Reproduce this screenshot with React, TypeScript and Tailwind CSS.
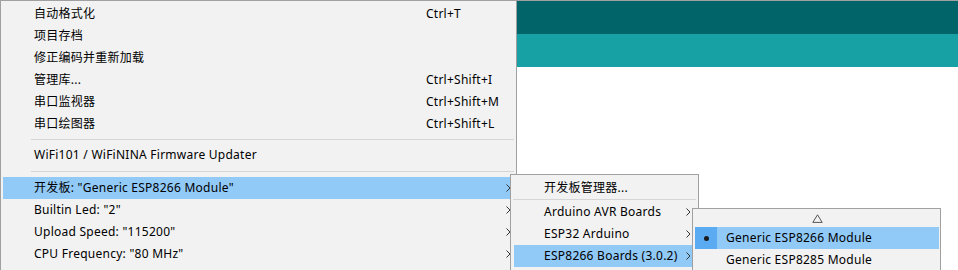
import type { ReactNode } from 'react';

const font = { fontFamily: '"Noto Sans", "Noto Sans CJK SC", sans-serif' };

function Arrow() {
  return (
    <svg width="5" height="8" viewBox="0 0 5 8" className="shrink-0">
      <polyline points="0.5,0.5 4,4 0.5,7.5" fill="none" stroke="#333" strokeWidth="1" />
    </svg>
  );
}

function MainItem({ label, shortcut, arrow, active }: { label: ReactNode; shortcut?: string; arrow?: boolean; active?: boolean }) {
  return (
    <div className={`h-[22px] mx-[2px] flex items-center pl-[31px] pr-[3px] ${active ? 'bg-[#91c9f7]' : ''}`}>
      <span className="w-[392px] whitespace-nowrap">{label}</span>
      <span className="flex-1 whitespace-nowrap">{shortcut}</span>
      {arrow && <Arrow />}
    </div>
  );
}

export default function App() {
  return (
    <div className="relative w-[958px] h-[270px] overflow-hidden bg-white text-[12px] tracking-[0.25px] text-black leading-none" style={font}>
      {/* editor background */}
      <div className="border-t border-[#a0a0a0]">
        <div className="h-[33px] bg-[#006468]" />
        <div className="h-[33px] bg-[#17a1a5]" />
      </div>

      {/* main menu */}
      <div className="absolute left-0 top-0 w-[517px] h-[270px] bg-[#f2f2f2] border-l border-r border-t border-[#a0a0a0] pt-[2px]">
        <MainItem label="自动格式化" shortcut="Ctrl+T" />
        <MainItem label="项目存档" />
        <MainItem label="修正编码并重新加载" />
        <MainItem label="管理库..." shortcut="Ctrl+Shift+I" />
        <MainItem label="串口监视器" shortcut="Ctrl+Shift+M" />
        <MainItem label="串口绘图器" shortcut="Ctrl+Shift+L" />
        <div className="h-[9px] pt-[4px] pl-[30px] pr-[2px]">
          <div className="h-px bg-[#d5d5d5]" />
        </div>
        <MainItem label="WiFi101 / WiFiNINA Firmware Updater" />
        <div className="h-[11px] pt-[5px] pl-[30px] pr-[2px]">
          <div className="h-px bg-[#d5d5d5]" />
        </div>
        <MainItem label={'开发板: "Generic ESP8266 Module"'} arrow active />
        <MainItem label={'Builtin Led: "2"'} arrow />
        <MainItem label={'Upload Speed: "115200"'} arrow />
        <MainItem label={'CPU Frequency: "80 MHz"'} arrow />
      </div>

      {/* boards submenu */}
      <div className="absolute left-[510px] top-[174px] w-[189px] h-[110px] bg-[#f2f2f2] border border-[#a0a0a0] pt-[2px]">
        <div className="h-[22px] flex items-center pl-[33px] whitespace-nowrap">开发板管理器...</div>
        <div className="h-[2px] mx-[2px] border-t border-[#d5d5d5]" />
        {['Arduino AVR Boards', 'ESP32 Arduino', 'ESP8266 Boards (3.0.2)'].map((b, i) => (
          <div key={b} className={`h-[22px] mx-[3px] flex items-center pl-[30px] pr-[4px] ${i === 2 ? 'bg-[#91c9f7]' : ''}`}>
            <span className="flex-1 whitespace-nowrap">{b}</span>
            <Arrow />
          </div>
        ))}
      </div>

      {/* ESP8266 boards submenu */}
      <div className="absolute left-[692px] top-[208px] w-[249px] h-[80px] bg-[#f2f2f2] border border-[#a0a0a0]">
        <div className="h-[18px] flex items-center justify-center pl-[2px]">
          <svg width="11" height="9" viewBox="0 0 11 9">
            <polygon points="5.5,0.8 10.2,8.4 0.8,8.4" fill="none" stroke="#555" strokeWidth="1" />
          </svg>
        </div>
        <div className="h-[22px] ml-[2px] mr-[1px] flex items-center bg-[#91c9f7]">
          <div className="w-[22px] h-full bg-[#5aabf2] flex items-center justify-center">
            <div className="w-[5px] h-[5px] rounded-full bg-[#1a1a1a]" />
          </div>
          <span className="pl-[9px] whitespace-nowrap">Generic ESP8266 Module</span>
        </div>
        <div className="h-[22px] ml-[2px] mr-[1px] flex items-center">
          <span className="pl-[31px] whitespace-nowrap">Generic ESP8285 Module</span>
        </div>
      </div>
    </div>
  );
}
